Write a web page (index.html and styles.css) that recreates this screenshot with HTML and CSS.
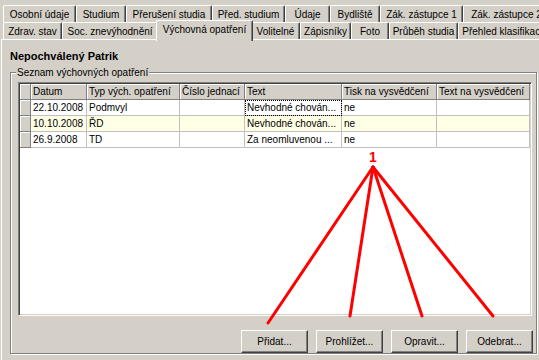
FILE: index.html
```html
<!DOCTYPE html>
<html lang="cs">
<head>
  <meta charset="UTF-8" />
  <title>Výchovná opatření</title>
  <link rel="stylesheet" href="styles.css">
</head>
<body>

  <div class="tabs">
    <div class="tabrow first">
      <div class="tab">Osobní údaje</div>
      <div class="tab">Studium</div>
      <div class="tab">Přerušení studia</div>
      <div class="tab">Před. studium</div>
      <div class="tab">Údaje</div>
      <div class="tab">Bydliště</div>
      <div class="tab">Zák. zástupce 1</div>
      <div class="tab">Zák. zástupce 2</div>
    </div>
    <div class="tabrow second">
      <div class="tab">Zdrav. stav</div>
      <div class="tab">Soc. znevýhodnění</div>
      <div class="tab active">Výchovná opatření</div>
      <div class="tab">Volitelné</div>
      <div class="tab">Zápisníky</div>
      <div class="tab">Foto</div>
      <div class="tab">Průběh studia</div>
      <div class="tab">Přehled klasifikace</div>
    </div>
  </div>

  <div class="page">
    <div class="student">Nepochválený Patrik</div>

    <fieldset class="group">
      <legend>Seznam výchovných opatření</legend>

      <div class="grid">
        <div class="gridrow head">
          <div class="ind"></div><div>Datum</div><div>Typ vých. opatření</div><div>Číslo jednací</div><div>Text</div><div>Tisk na vysvědčení</div><div>Text na vysvědčení</div>
        </div>
        <div class="gridrow">
          <div class="ind"></div><div>22.10.2008</div><div>Podmvyl</div><div></div><div class="focus">Nevhodné chován...</div><div>ne</div><div></div>
        </div>
        <div class="gridrow alt">
          <div class="ind"></div><div>10.10.2008</div><div>ŘD</div><div></div><div>Nevhodné chován...</div><div>ne</div><div></div>
        </div>
        <div class="gridrow">
          <div class="ind"></div><div>26.9.2008</div><div>TD</div><div></div><div>Za neomluvenou ...</div><div>ne</div><div></div>
        </div>
      </div>

      <div class="buttons">
        <button>Přidat...</button>
        <button>Prohlížet...</button>
        <button>Opravit...</button>
        <button>Odebrat...</button>
      </div>
    </fieldset>
  </div>

  <span class="marknum">1</span>
  <svg class="marks" width="539" height="360" viewBox="0 0 539 360">
    <g stroke="#f00" stroke-width="3" stroke-linecap="round">
      <line x1="373" y1="167" x2="268" y2="323" />
      <line x1="373" y1="167" x2="350" y2="316" />
      <line x1="373" y1="167" x2="422" y2="316" />
      <line x1="373" y1="167" x2="493" y2="316" />
    </g>
  </svg>

</body>
</html>
```

FILE: styles.css
```css
body {
  margin: 0;
  width: 539px;
  height: 360px;
  overflow: hidden;
  position: relative;
  background: #d4d0c8;
  font-family: "Liberation Sans", Arial, sans-serif;
  font-size: 10px;
  color: #000;
}

/* tabs */
.tabs {
  padding: 5px 0 0 3px;
}
.tabrow {
  display: grid;
  height: 17px;
}
.first {
  grid-template-columns: 73px 50px 86px 73px 45px 50px 83px 87px;
}
.second {
  grid-template-columns: 59px 96px 93px 49px 51px 38px 69px 92px;
}
.tab {
  box-sizing: border-box;
  height: 17px;
  padding-top: 2px;
  line-height: 14px;
  background: #d4d0c8;
  border-top: 1px solid #fff;
  border-left: 1px solid #fff;
  border-right: 1px solid #404040;
  border-radius: 2px 2px 0 0;
  box-shadow: inset -1px 0 0 #808080;
  text-align: center;
  white-space: nowrap;
  overflow: hidden;
}
.tab.active {
  position: relative;
  z-index: 1;
  height: 21px;
  margin: -2px -2px 0;
}

/* page */
.page {
  height: 320px;
  margin-left: 1px;
  padding: 10px 0 0 8px;
  border-top: 1px solid #fff;
  border-left: 1px solid #fff;
}
.student {
  font-size: 11px;
  font-weight: bold;
  line-height: 13px;
}
.group {
  margin: 3px 2px 0 0;
  padding: 3px 4px 0 7px;
  min-width: 0;
  border: 1px solid #808080;
  box-shadow: inset 1px 1px 0 #fff, 1px 1px 0 #fff;
}
.group legend {
  margin-left: -2px;
  padding: 0 1px;
  line-height: 13px;
  background: #d4d0c8;
}

/* grid */
.grid {
  box-sizing: border-box;
  height: 234px;
  padding: 1px;
  background: #fff;
  border: 1px solid;
  border-color: #808080 #fff #fff #808080;
  box-shadow: inset 1px 1px 0 #404040, inset -1px -1px 0 #d4d0c8;
}
.gridrow {
  display: grid;
  grid-template-columns: 11px 56px 93px 65px 97px 95px 93px;
}
.gridrow div {
  box-sizing: border-box;
  height: 16px;
  padding: 0 2px;
  line-height: 15px;
  border-right: 1px solid #c0c0c0;
  border-bottom: 1px solid #c0c0c0;
  white-space: nowrap;
  overflow: hidden;
}
.alt div {
  background: #ffffe6;
}
.head div,
.gridrow .ind {
  background: #d4d0c8;
  border-color: #808080;
  box-shadow: inset 1px 1px 0 #fff;
}
.focus {
  outline: 1px dotted #000;
  outline-offset: -1px;
}

/* buttons */
.buttons {
  display: flex;
  justify-content: flex-end;
  gap: 8px;
  margin: 14px -1px 0 0;
}
.buttons button {
  box-sizing: border-box;
  width: 67px;
  height: 23px;
  padding: 0;
  font: inherit;
  line-height: 21px;
  color: #000;
  background: #d4d0c8;
  border: 1px solid;
  border-color: #fff #404040 #404040 #fff;
  box-shadow: inset -1px -1px 0 #808080;
}

/* red annotation drawn over the form */
.marks {
  position: absolute;
  left: 0;
  top: 0;
  pointer-events: none;
}
.marknum {
  position: absolute;
  left: 369px;
  top: 149px;
  font-size: 14px;
  font-weight: bold;
  line-height: 16px;
  color: #f00;
}
```
